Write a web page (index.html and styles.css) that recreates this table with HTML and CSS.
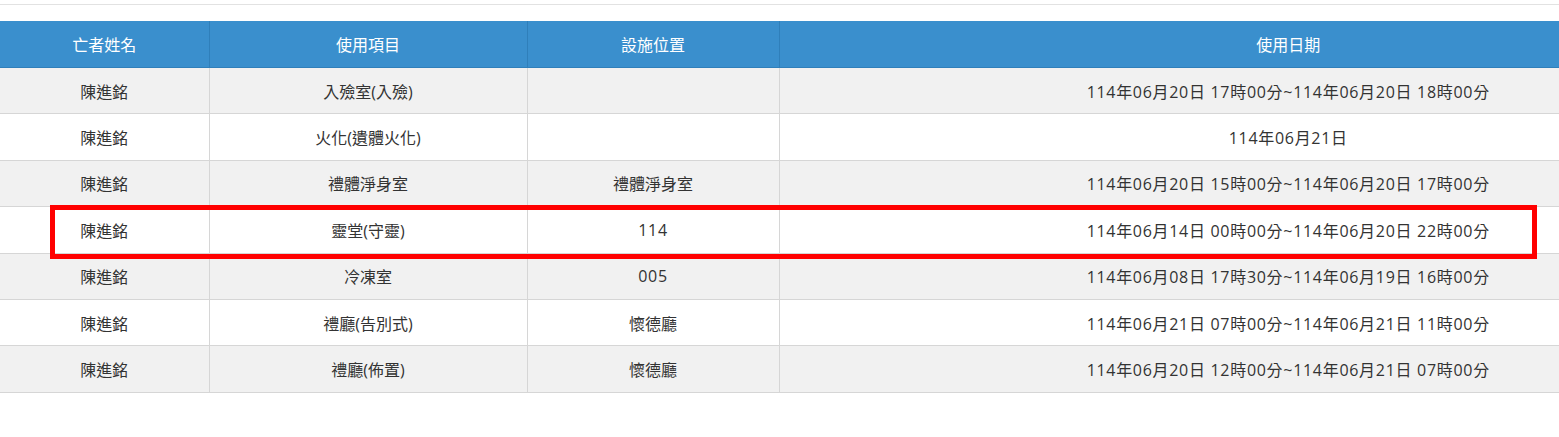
FILE: index.html
```html
<!DOCTYPE html>
<html lang="zh-Hant">
<head>
<meta charset="utf-8">
<title>使用紀錄</title>
<link rel="stylesheet" href="styles.css">
</head>
<body>
<div class="page">
  <div class="topline"></div>
  <div class="table-wrap">
    <table class="records">
      <colgroup>
        <col class="c-name">
        <col class="c-item">
        <col class="c-place">
        <col class="c-date">
      </colgroup>
      <thead>
        <tr><th>亡者姓名</th><th>使用項目</th><th>設施位置</th><th>使用日期</th></tr>
      </thead>
      <tbody>
        <tr><td>陳進銘</td><td>入殮室(入殮)</td><td></td><td class="date">114年06月20日 17時00分~114年06月20日 18時00分</td></tr>
        <tr><td>陳進銘</td><td>火化(遺體火化)</td><td></td><td class="date">114年06月21日</td></tr>
        <tr><td>陳進銘</td><td>禮體淨身室</td><td>禮體淨身室</td><td class="date">114年06月20日 15時00分~114年06月20日 17時00分</td></tr>
        <tr><td>陳進銘</td><td>靈堂(守靈)</td><td class="num">114</td><td class="date">114年06月14日 00時00分~114年06月20日 22時00分</td></tr>
        <tr><td>陳進銘</td><td>冷凍室</td><td class="num">005</td><td class="date">114年06月08日 17時30分~114年06月19日 16時00分</td></tr>
        <tr><td>陳進銘</td><td>禮廳(告別式)</td><td>懷德廳</td><td class="date">114年06月21日 07時00分~114年06月21日 11時00分</td></tr>
        <tr><td>陳進銘</td><td>禮廳(佈置)</td><td>懷德廳</td><td class="date">114年06月20日 12時00分~114年06月21日 07時00分</td></tr>
      </tbody>
    </table>
    <div class="highlight"></div>
  </div>
</div>
</body>
</html>
```
FILE: styles.css
```css
html, body {
  margin: 0;
  padding: 0;
  overflow: hidden;
  background: #ffffff;
}
body {
  font-family: "Open Sans", "Noto Sans CJK TC", sans-serif;
  font-size: 16px;
  color: #333333;
}
.page {
  width: 1559px;
  overflow: hidden;
}
.topline {
  height: 4px;
  border-bottom: 1px solid #e2e2e2;
  margin-bottom: 16px;
}
.table-wrap {
  position: relative;
  width: 1559px;
  overflow: hidden;
}
.records {
  border-collapse: collapse;
  table-layout: fixed;
  width: 1797px;
}
.c-name { width: 209px; }
.c-item { width: 318px; }
.c-place { width: 252px; }
.c-date { width: 1018px; }
.records th {
  background: #3a8fcd;
  color: #ffffff;
  font-weight: normal;
  height: 46px;
  padding: 0;
  text-align: center;
  border-left: 1px solid #2f7fba;
  border-bottom: 1px solid #2f7fba;
}
.records th:first-child { border-left: none; }
.records td {
  height: 45.4px;
  padding: 0;
  text-align: center;
  border-left: 1px solid #d6d6d6;
  border-bottom: 1px solid #d6d6d6;
  white-space: nowrap;
}
.records td:first-child { border-left: none; }
.records td.date,
.records td.num { letter-spacing: 0.7px; }
.records tbody tr:nth-child(odd) td { background: #f1f1f1; }
.records tbody tr:nth-child(even) td { background: #ffffff; }
.highlight {
  position: absolute;
  left: 50px;
  top: 184px;
  width: 1477px;
  height: 44px;
  border: 5px solid #ff0000;
  pointer-events: none;
}
```
